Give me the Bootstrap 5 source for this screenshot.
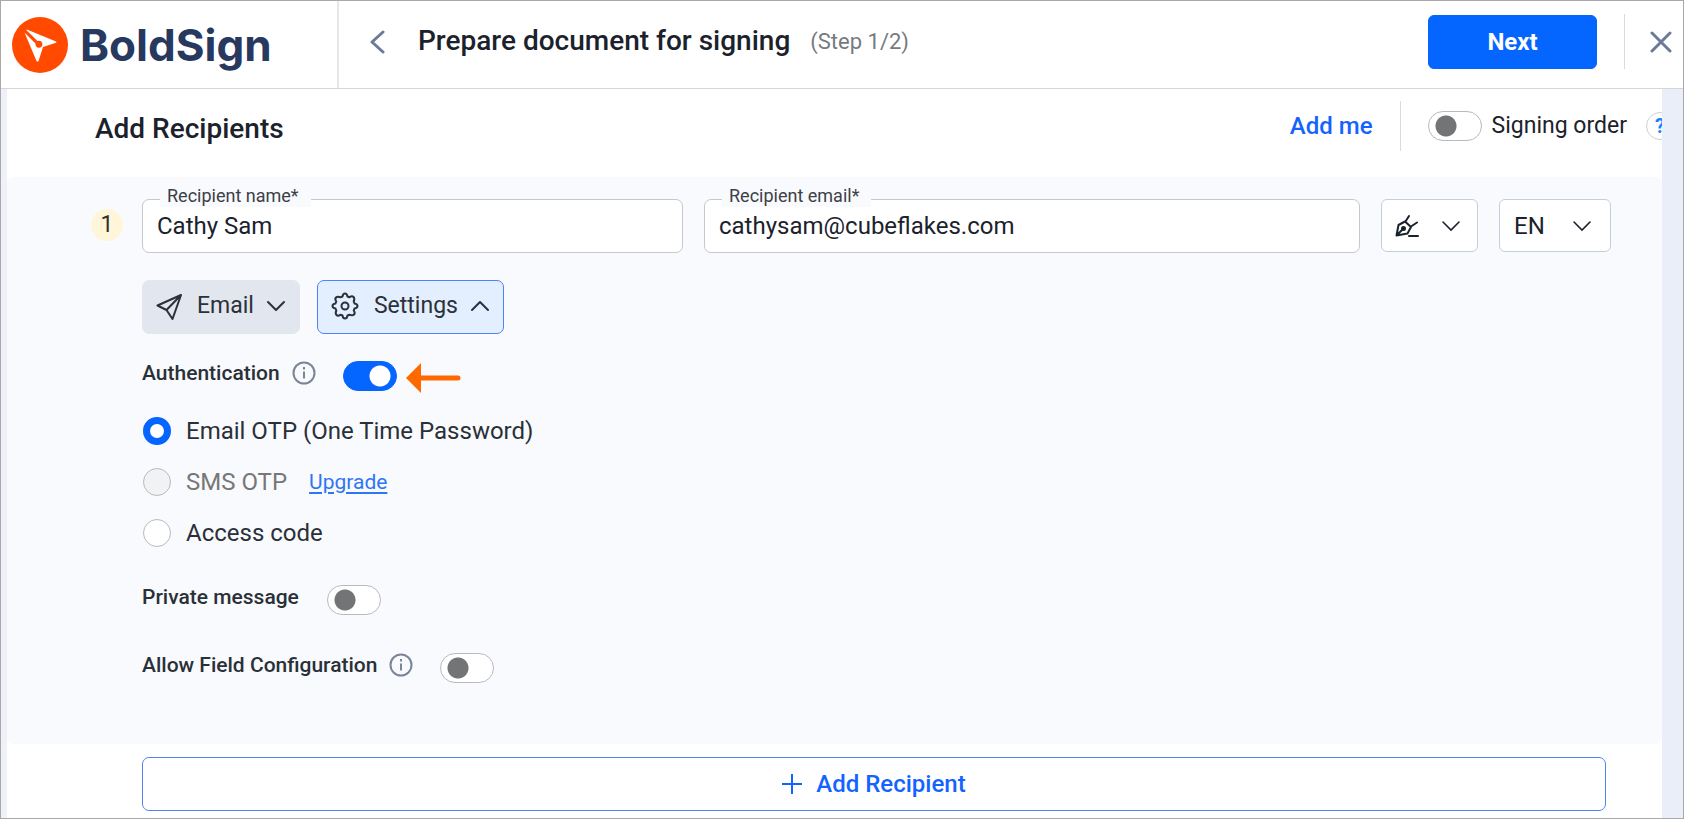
<!DOCTYPE html>
<html lang="en">
<head>
<meta charset="utf-8">
<meta name="viewport" content="width=device-width, initial-scale=1">
<title>BoldSign - Prepare document for signing</title>
<link href="https://cdn.jsdelivr.net/npm/bootstrap@5.3.0/dist/css/bootstrap.min.css" rel="stylesheet">
<style>
  :root { --brand: #0565ff; --ink: #1b222c; --line: #c5c8cf; --panel: #f9fafd; --slate: #6b7a99; }
  body { font-family: Roboto, "Liberation Sans", sans-serif; font-size: 24px; line-height: 32px; color: var(--ink); background: #fff; }
  svg { display: block; flex: none; }
  .app-frame { min-height: 100vh; border: 1px solid #a9a9ab; overflow: hidden; }

  /* top bar */
  .app-header { height: 88px; border-bottom: 1px solid #d5d6d8; }
  .brand-cell { width: 338px; padding-left: 11px; border-right: 2px solid #e6e7e9; gap: 12px; color: #27395f; text-decoration: none; }
  .brand-name { font-family: Inter, "Liberation Sans", sans-serif; font-weight: 700; font-size: 44px; line-height: 48px; }
  .header-main { padding: 13px 10px 19px 26px; }
  .icon-btn { border: 0; background: none; padding: 0; width: 24px; height: 32px; display: flex; align-items: center; justify-content: center; color: var(--slate); }
  .page-title { font-size: 28px; line-height: 32px; font-weight: 500; margin: 0 20px 2px 29px; }
  .step-note { font-size: 22px; color: #767a80; }
  .next-btn { width: 169px; height: 54px; border-radius: 6px; background: var(--brand); border-color: var(--brand); color: #fff; font-size: 24px; font-weight: 700; }
  .rule { width: 1px; background: #d9dadd; }
  .header-rule { margin: 0 24px 0 27px; }

  /* section heading */
  .work-area { background: #fff; border-left: 6px solid #eef1f8; border-right: 21px solid #e9eef8; }
  .title-row { height: 88px; padding-left: 88px; overflow: hidden; }
  .section-title { font-size: 28px; line-height: 32px; font-weight: 500; }
  .title-tools { margin-right: -12px; padding-bottom: 14px; }
  .tools-rule { height: 50px; margin: 0 27px; }
  .add-me { color: #1463ff; font-weight: 500; font-size: 24px; text-decoration: none; }
  .order-label { font-size: 23px; margin: 0 19px 0 10px; }
  .help-btn { width: 28px; height: 28px; border-radius: 50%; border: 1px solid #cfcfd2; background: #fff; color: #1080ff; font-size: 20px; line-height: 24px; font-weight: 700; padding: 0; }

  .toggle.form-check-input { width: 54px; height: 30px; margin: 0; border: 1px solid #b9babd; border-radius: 15px; flex: none; background: #fff radial-gradient(circle at 17px 14px, #737476 10px, transparent 11px) no-repeat; }
  .toggle.form-check-input:checked { background: var(--brand) radial-gradient(circle at 36px 14px, #fff 10px, transparent 11px) no-repeat; border-color: var(--brand); }

  /* recipient card */
  .recipient { background: var(--panel); padding: 22px 51px 61px 84px; border-radius: 6px; }
  .order-num { width: 32px; height: 32px; border-radius: 50%; background: #fff5d8; margin: 10px 19px 0 0; flex: none; text-align: center; font-size: 23px; line-height: 32px; color: #33302c; }
  .field-grid { display: grid; grid-template-columns: 541fr 656fr 97px 112px; column-gap: 21px; }
  .field { position: relative; }
  .field label { position: absolute; left: 18px; top: -14px; background: var(--panel); padding: 0 12px 0 7px; font-size: 18px; line-height: 22px; color: #3c4047; }
  .field .form-control { height: 54px; border: 1px solid var(--line); border-radius: 7px; padding: 0 14px; font-size: 24px; color: var(--ink); }
  .box-btn { height: 53px; border: 1px solid #c5ced9; border-radius: 6px; background: #fff; color: var(--ink); padding: 0 12px; }
  .lang-select { appearance: none; width: 100%; font-size: 24px; padding: 0 14px; background: #fff url("data:image/svg+xml,%3Csvg xmlns='http://www.w3.org/2000/svg' width='20' height='12' fill='none' stroke='%231b222c' stroke-width='1.6' stroke-linecap='round'%3E%3Cpath d='M2 2l8 8 8-8'/%3E%3C/svg%3E") no-repeat right 18px center; }
  .opt-row { margin-top: 27px; gap: 17px; }
  .opt-btn { height: 54px; border-radius: 7px; border: 1px solid #e2e7ef; background: #e2e7ef; color: #2b3138; font-size: 23px; line-height: 32px; padding: 0 13px 2px 13px; display: flex; align-items: center; }
  .opt-btn.open { background: #e3eefe; border-color: #4f83f5; }
  .label-mid { margin: 0 12px 0 15px; }

  /* settings */
  .setting { display: flex; align-items: flex-start; font-size: 21px; line-height: 24px; font-weight: 500; color: #2a3038; }
  .auth-row { margin-top: 27px; }
  .message-row { margin-top: 27px; }
  .message-row .toggle { margin-left: 28px; }
  .config-row { margin-top: 38px; }
  .info-icon { margin: 0 27px 0 12px; }
  .radio-set { margin-top: 12px; }
  .radio-line { display: flex; align-items: center; height: 51px; color: #2a3038; }
  .radio-line .form-check-input { width: 28px; height: 28px; margin: 0 15px 0 1px; border: 1px solid #b9babd; background: #fff; flex: none; opacity: 1; }
  .radio-line .form-check-input:checked { border: 7px solid var(--brand); }
  .radio-line .form-check-input:disabled { background: #f1f2f4; }
  .radio-line .form-check-input:disabled ~ label { color: #777; opacity: 1; }
  .upgrade { font-size: 21px; color: #2f76f5; margin-left: 22px; text-underline-offset: 3px; }

  .add-row { padding: 13px 56px 7px 135px; }
  .add-btn { height: 54px; border: 1px solid #4f83f5; border-radius: 7px; background: #fff; color: #1463ff; font-size: 24px; font-weight: 500; gap: 14px; }
</style>
</head>
<body>
<div class="app-frame d-flex flex-column">
  <header class="app-header d-flex">
    <a class="brand-cell d-flex align-items-center flex-shrink-0" href="#">
      <svg width="56" height="56" viewBox="0 0 56 56" aria-hidden="true">
        <circle cx="28" cy="28" r="28" fill="#ff4a00"/>
        <path d="M12.500 15.500L23.500 26.500A3.500 3.500 0 1 0 25.500 24L14.500 13.200Q14 12.200 15.500 12.700L44 24.500Q45 25.200 44 25.800L31 30L26.500 44Q25.500 45.500 24.500 44Z" fill="#fff"/>
      </svg>
      <span class="brand-name">BoldSign</span>
    </a>
    <div class="header-main d-flex align-items-center flex-grow-1">
      <button class="icon-btn" type="button" aria-label="Back">
        <svg width="16" height="24" fill="none" stroke="currentColor" stroke-width="3" stroke-linecap="round" stroke-linejoin="round"><path d="M14 2L3 12l11 10"/></svg>
      </button>
      <h1 class="page-title">Prepare document for signing</h1>
      <span class="step-note">(Step 1/2)</span>
      <button class="btn next-btn ms-auto" type="button">Next</button>
      <span class="rule header-rule align-self-stretch"></span>
      <button class="icon-btn" type="button" aria-label="Close">
        <svg width="22" height="22" fill="none" stroke="currentColor" stroke-width="3" stroke-linecap="round"><path d="M2 2l18 18M20 2L2 20"/></svg>
      </button>
    </div>
  </header>

  <main class="work-area flex-grow-1">
    <div class="title-row d-flex align-items-center">
      <h2 class="section-title mb-2">Add Recipients</h2>
      <div class="title-tools d-flex align-items-center ms-auto">
        <a class="add-me" href="#">Add me</a>
        <span class="rule tools-rule"></span>
        <input class="form-check-input toggle" type="checkbox" role="switch" id="order">
        <label class="order-label" for="order">Signing order</label>
        <button class="help-btn" type="button">?</button>
      </div>
    </div>

    <section class="recipient d-flex">
      <div class="order-num">1</div>
      <div class="flex-grow-1">
        <div class="field-grid">
          <div class="field">
            <input class="form-control" id="rname" type="text" value="Cathy Sam">
            <label for="rname">Recipient name*</label>
          </div>
          <div class="field">
            <input class="form-control" id="remail" type="text" value="cathysam@cubeflakes.com">
            <label for="remail">Recipient email*</label>
          </div>
          <button class="box-btn d-flex align-items-center justify-content-between" type="button" aria-label="Signer role">
            <svg width="26" height="26" viewBox="0 0 26 26" fill="none" stroke="currentColor" stroke-width="2" stroke-linecap="round" stroke-linejoin="round"><path d="M2.500 22.500L4.500 12L11 8.500L17 14L13.500 20.500L2.500 22.500L8.500 16.500M11.500 8.500L15 3M17 13.500L23 9.500M15 23h9"/><circle cx="9.500" cy="15.500" r="1.500" fill="currentColor"/></svg>
            <svg class="me-1" width="20" height="12" fill="none" stroke="currentColor" stroke-width="1.600" stroke-linecap="round"><path d="M2 2l8 8 8-8"/></svg>
          </button>
          <select class="box-btn lang-select" aria-label="Language"><option>EN</option></select>
        </div>

        <div class="opt-row d-flex">
          <button class="opt-btn" type="button">
            <svg width="26" height="28" viewBox="0 0 26 28" fill="none" stroke="currentColor" stroke-width="2" stroke-linejoin="round"><path d="M25 3L1.500 13.500l9 4.500 6 9L25 3L10.500 18"/></svg>
            <span class="label-mid">Email</span>
            <svg width="20" height="12" fill="none" stroke="currentColor" stroke-width="2" stroke-linecap="round" stroke-linejoin="round"><path d="M2 2l8 8 8-8"/></svg>
          </button>
          <button class="opt-btn open" type="button">
            <svg width="28" height="28" viewBox="0 0 28 28" fill="none" stroke="currentColor" stroke-width="2" stroke-linejoin="round"><path d="M11.500 4.500Q12 1.500 14 1.500T16.500 4.500L18.500 5.300Q21 3.500 22.500 5T22.700 9.500L23.500 11.500Q26.500 12 26.500 14T23.500 16.500L22.700 18.500Q24.500 21 23 22.500T18.500 22.700L16.500 23.500Q16 26.500 14 26.500T11.500 23.500L9.500 22.700Q7 24.500 5.500 23T5.300 18.500L4.500 16.500Q1.500 16 1.500 14T4.500 11.500L5.300 9.500Q3.500 7 5 5.500T9.500 5.300Z"/><circle cx="14" cy="14" r="3.500"/></svg>
            <span class="label-mid">Settings</span>
            <svg width="20" height="12" fill="none" stroke="currentColor" stroke-width="2" stroke-linecap="round" stroke-linejoin="round"><path d="M2 10l8-8 8 8"/></svg>
          </button>
        </div>

        <div class="setting auth-row">
          <label for="auth">Authentication</label>
          <svg class="info-icon" width="24" height="24" viewBox="0 0 24 24" fill="none" stroke="#7b8598" stroke-width="2"><circle cx="12" cy="12" r="10.500"/><path d="M12 10.500v7M12 6v2.500"/></svg>
          <input class="form-check-input toggle" type="checkbox" role="switch" id="auth" checked>
          <svg class="ms-2" width="56" height="32" aria-hidden="true"><path d="M1 17L16 2v30z" fill="#ff6a00"/><path d="M15 17h38" stroke="#ff6a00" stroke-width="5" stroke-linecap="round"/></svg>
        </div>

        <div class="radio-set">
          <div class="radio-line">
            <input class="form-check-input" type="radio" name="otp" id="o1" checked>
            <label for="o1">Email OTP (One Time Password)</label>
          </div>
          <div class="radio-line">
            <input class="form-check-input" type="radio" name="otp" id="o2" disabled>
            <label for="o2">SMS OTP</label>
            <a class="upgrade" href="#">Upgrade</a>
          </div>
          <div class="radio-line">
            <input class="form-check-input" type="radio" name="otp" id="o3">
            <label for="o3">Access code</label>
          </div>
        </div>

        <div class="setting message-row">
          <label for="pm">Private message</label>
          <input class="form-check-input toggle" type="checkbox" role="switch" id="pm">
        </div>
        <div class="setting config-row">
          <label for="fc">Allow Field Configuration</label>
          <svg class="info-icon" width="24" height="24" viewBox="0 0 24 24" fill="none" stroke="#7b8598" stroke-width="2"><circle cx="12" cy="12" r="10.500"/><path d="M12 10.500v7M12 6v2.500"/></svg>
          <input class="form-check-input toggle" type="checkbox" role="switch" id="fc">
        </div>
      </div>
    </section>

    <div class="add-row">
      <button class="add-btn w-100 d-flex align-items-center justify-content-center" type="button">
        <svg width="20" height="20" fill="none" stroke="currentColor" stroke-width="2"><path d="M10 0v20M0 10h20"/></svg>
        Add Recipient
      </button>
    </div>
  </main>
</div>
<script src="https://cdn.jsdelivr.net/npm/bootstrap@5.3.0/dist/js/bootstrap.bundle.min.js"></script>
</body>
</html>
